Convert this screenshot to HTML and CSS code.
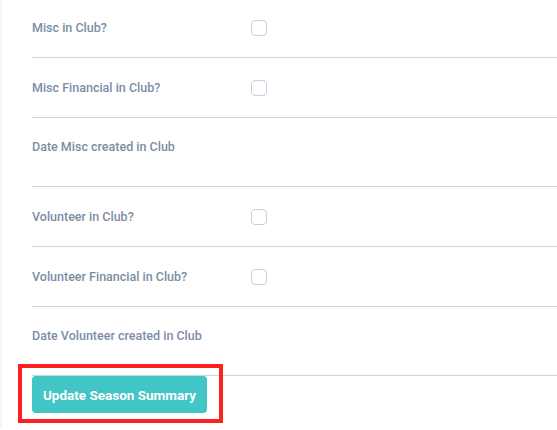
FILE: index.html
```html
<!DOCTYPE html>
<html>
<head>
<meta charset="utf-8">
<link rel="stylesheet" href="styles.css">
</head>
<body>
<div class="page">
  <form class="form">
    <div class="row check-row">
      <span class="label">Misc in Club?</span>
      <span class="checkbox"></span>
    </div>
    <div class="row check-row">
      <span class="label">Misc Financial in Club?</span>
      <span class="checkbox"></span>
    </div>
    <div class="row date-row">
      <span class="label">Date Misc created in Club</span>
    </div>
    <div class="row check-row">
      <span class="label">Volunteer in Club?</span>
      <span class="checkbox"></span>
    </div>
    <div class="row check-row">
      <span class="label">Volunteer Financial in Club?</span>
      <span class="checkbox"></span>
    </div>
    <div class="row date-row">
      <span class="label">Date Volunteer created in Club</span>
    </div>
    <div class="actions">
      <button type="button" class="btn">Update Season Summary</button>
      <span class="highlight"></span>
    </div>
  </form>
</div>
</body>
</html>
```
FILE: styles.css
```css
html, body {
  margin: 0;
  padding: 0;
  background: #ffffff;
}
body {
  font-family: "Roboto", "Liberation Sans", sans-serif;
  overflow: hidden;
}
.page {
  border-left: 2px solid #f3f7fa;
  padding-left: 30px;
  height: 430px;
  box-sizing: border-box;
}
.form {
  margin-top: -2px;
  display: flex;
  flex-direction: column;
}
.row {
  border-bottom: 1px solid #c9d5e1;
  box-sizing: border-box;
  flex: none;
}
.check-row {
  height: 60px;
  display: grid;
  grid-template-columns: 219px 16px;
  align-items: center;
}
.date-row {
  height: 69px;
  padding-top: 19px;
}
.label {
  display: block;
  font-size: 12.5px;
  line-height: 20px;
  font-weight: 500;
  color: #7c8da5;
}
.checkbox {
  width: 16px;
  height: 16px;
  border: 1px solid #c3d1de;
  border-radius: 4px;
  box-sizing: border-box;
  background: #fff;
}
.actions {
  position: relative;
  display: flex;
  flex: none;
}
.btn {
  width: 175px;
  height: 37px;
  background: #41c5c7;
  color: #ffffff;
  border: none;
  border-radius: 4px;
  font-family: "Roboto", "Liberation Sans", sans-serif;
  font-weight: 700;
  font-size: 13.5px;
  padding: 0;
}
.highlight {
  position: absolute;
  left: -14px;
  top: -12px;
  width: 205px;
  height: 59px;
  border: 4px solid #ff1f1f;
  box-sizing: border-box;
}
```
